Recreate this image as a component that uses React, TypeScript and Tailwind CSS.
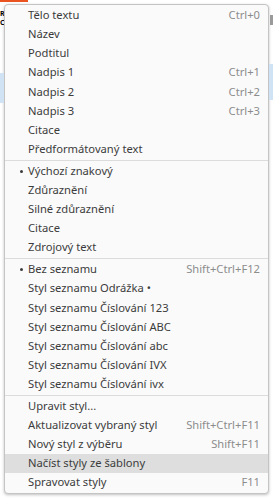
import React from "react";

type Item = { label: string; shortcut?: string; bullet?: boolean; active?: boolean };

const groups: Item[][] = [
  [
    { label: "Tělo textu", shortcut: "Ctrl+0" },
    { label: "Název" },
    { label: "Podtitul" },
    { label: "Nadpis 1", shortcut: "Ctrl+1" },
    { label: "Nadpis 2", shortcut: "Ctrl+2" },
    { label: "Nadpis 3", shortcut: "Ctrl+3" },
    { label: "Citace" },
    { label: "Předformátovaný text" },
  ],
  [
    { label: "Výchozí znakový", bullet: true },
    { label: "Zdůraznění" },
    { label: "Silné zdůraznění" },
    { label: "Citace" },
    { label: "Zdrojový text" },
  ],
  [
    { label: "Bez seznamu", shortcut: "Shift+Ctrl+F12", bullet: true },
    { label: "Styl seznamu Odrážka •" },
    { label: "Styl seznamu Číslování 123" },
    { label: "Styl seznamu Číslování ABC" },
    { label: "Styl seznamu Číslování abc" },
    { label: "Styl seznamu Číslování IVX" },
    { label: "Styl seznamu Číslování ivx" },
  ],
  [
    { label: "Upravit styl..." },
    { label: "Aktualizovat vybraný styl", shortcut: "Shift+Ctrl+F11" },
    { label: "Nový styl z výběru", shortcut: "Shift+F11" },
    { label: "Načíst styly ze šablony", active: true },
    { label: "Spravovat styly", shortcut: "F11" },
  ],
];

const Row = ({ item }: { item: Item }) => (
  <div
    className={`flex h-[19.1px] items-center pl-[9px] pr-[8px] ${
      item.active ? "bg-[#dedede]" : ""
    }`}
  >
    <span className="flex w-[14px] justify-center">
      {item.bullet && <span className="h-[3px] w-[3px] rounded-full bg-[#3c3c3c]" />}
    </span>
    <span className="flex-1 whitespace-nowrap text-[#3c3c3c]">{item.label}</span>
    {item.shortcut && <span className="whitespace-nowrap text-[#8c8c8c]">{item.shortcut}</span>}
  </div>
);

export default function App() {
  return (
    <div
      className="relative h-[500px] w-[273px] overflow-hidden bg-white"
      style={{ fontFamily: '"Noto Sans", sans-serif' }}
    >
      {/* bits of the window behind the menu */}
      <div className="absolute left-0 top-0 h-[2px] w-[28px] bg-[#e95420]" />
      <div className="absolute left-0 top-[10px] flex w-[4px] flex-col gap-[2px] overflow-hidden">
        <div className="text-[7px] font-bold leading-[7px] text-black">R</div>
        <div className="text-[7px] font-bold leading-[7px] text-black">C</div>
        <div className="mt-[45px] h-[30px] bg-[#cfe3f5]" />
      </div>
      <div className="absolute right-0 top-[15px] flex w-[4px] flex-col items-end gap-[39px]">
        <div className="h-[10px] w-[3px] bg-[#9a9a9a]" />
        <div className="h-[36px] w-[4px] bg-[#cfe3f5]" />
      </div>

      <div className="ml-[4px] mt-[4px] w-[265px] rounded-[4px] border border-[#c4c4c4] bg-[#fafafa] py-[1px] text-[11.2px] shadow-[0_1px_3px_rgba(0,0,0,0.25)]">
        {groups.map((g, gi) => (
          <div key={gi}>
            {gi > 0 && <div className="my-[1px] h-px bg-[#dcdcdc]" />}
            {g.map((item, i) => (
              <Row key={i} item={item} />
            ))}
          </div>
        ))}
      </div>
    </div>
  );
}
